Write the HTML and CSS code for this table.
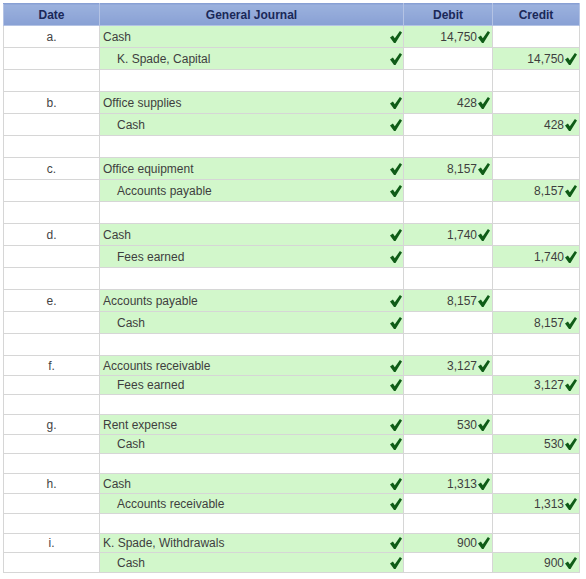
FILE: index.html
```html
<!DOCTYPE html>
<html>
<head>
<meta charset="utf-8">
<link rel="stylesheet" href="styles.css">
</head>
<body>
<svg class="defs" width="0" height="0" aria-hidden="true">
  <defs>
    <symbol id="tick" viewBox="0 0 12 12">
      <path d="M0 6.6 L2.9 4.5 L4.8 7.3 L9.9 0 L12 1.4 L5.5 11.9 L4 11.9 Z"/>
    </symbol>
  </defs>
</svg>
<table class="journal">
  <thead>
    <tr>
      <th class="c-date">Date</th>
      <th class="c-acct">General Journal</th>
      <th class="c-debit">Debit</th>
      <th class="c-credit">Credit</th>
    </tr>
  </thead>
  <tbody>
    <tr><td class="date">a.</td><td class="acct green"><div class="cell"><span>Cash</span><svg class="tk"><use href="#tick"/></svg></div></td><td class="amt green"><div class="num">14,750<svg class="tk"><use href="#tick"/></svg></div></td><td class="amt"></td></tr>
    <tr><td class="date"></td><td class="acct green"><div class="cell"><span class="ind">K. Spade, Capital</span><svg class="tk"><use href="#tick"/></svg></div></td><td class="amt"></td><td class="amt green"><div class="num">14,750<svg class="tk"><use href="#tick"/></svg></div></td></tr>
    <tr class="blank"><td></td><td></td><td></td><td></td></tr>

    <tr><td class="date">b.</td><td class="acct green"><div class="cell"><span>Office supplies</span><svg class="tk"><use href="#tick"/></svg></div></td><td class="amt green"><div class="num">428<svg class="tk"><use href="#tick"/></svg></div></td><td class="amt"></td></tr>
    <tr><td class="date"></td><td class="acct green"><div class="cell"><span class="ind">Cash</span><svg class="tk"><use href="#tick"/></svg></div></td><td class="amt"></td><td class="amt green"><div class="num">428<svg class="tk"><use href="#tick"/></svg></div></td></tr>
    <tr class="blank"><td></td><td></td><td></td><td></td></tr>

    <tr><td class="date">c.</td><td class="acct green"><div class="cell"><span>Office equipment</span><svg class="tk"><use href="#tick"/></svg></div></td><td class="amt green"><div class="num">8,157<svg class="tk"><use href="#tick"/></svg></div></td><td class="amt"></td></tr>
    <tr><td class="date"></td><td class="acct green"><div class="cell"><span class="ind">Accounts payable</span><svg class="tk"><use href="#tick"/></svg></div></td><td class="amt"></td><td class="amt green"><div class="num">8,157<svg class="tk"><use href="#tick"/></svg></div></td></tr>
    <tr class="blank"><td></td><td></td><td></td><td></td></tr>

    <tr><td class="date">d.</td><td class="acct green"><div class="cell"><span>Cash</span><svg class="tk"><use href="#tick"/></svg></div></td><td class="amt green"><div class="num">1,740<svg class="tk"><use href="#tick"/></svg></div></td><td class="amt"></td></tr>
    <tr><td class="date"></td><td class="acct green"><div class="cell"><span class="ind">Fees earned</span><svg class="tk"><use href="#tick"/></svg></div></td><td class="amt"></td><td class="amt green"><div class="num">1,740<svg class="tk"><use href="#tick"/></svg></div></td></tr>
    <tr class="blank"><td></td><td></td><td></td><td></td></tr>

    <tr><td class="date">e.</td><td class="acct green"><div class="cell"><span>Accounts payable</span><svg class="tk"><use href="#tick"/></svg></div></td><td class="amt green"><div class="num">8,157<svg class="tk"><use href="#tick"/></svg></div></td><td class="amt"></td></tr>
    <tr><td class="date"></td><td class="acct green"><div class="cell"><span class="ind">Cash</span><svg class="tk"><use href="#tick"/></svg></div></td><td class="amt"></td><td class="amt green"><div class="num">8,157<svg class="tk"><use href="#tick"/></svg></div></td></tr>
    <tr class="blank"><td></td><td></td><td></td><td></td></tr>

    <tr><td class="date">f.</td><td class="acct green"><div class="cell"><span>Accounts receivable</span><svg class="tk"><use href="#tick"/></svg></div></td><td class="amt green"><div class="num">3,127<svg class="tk"><use href="#tick"/></svg></div></td><td class="amt"></td></tr>
    <tr><td class="date"></td><td class="acct green"><div class="cell"><span class="ind">Fees earned</span><svg class="tk"><use href="#tick"/></svg></div></td><td class="amt"></td><td class="amt green"><div class="num">3,127<svg class="tk"><use href="#tick"/></svg></div></td></tr>
    <tr class="blank"><td></td><td></td><td></td><td></td></tr>

    <tr><td class="date">g.</td><td class="acct green"><div class="cell"><span>Rent expense</span><svg class="tk"><use href="#tick"/></svg></div></td><td class="amt green"><div class="num">530<svg class="tk"><use href="#tick"/></svg></div></td><td class="amt"></td></tr>
    <tr><td class="date"></td><td class="acct green"><div class="cell"><span class="ind">Cash</span><svg class="tk"><use href="#tick"/></svg></div></td><td class="amt"></td><td class="amt green"><div class="num">530<svg class="tk"><use href="#tick"/></svg></div></td></tr>
    <tr class="blank"><td></td><td></td><td></td><td></td></tr>

    <tr><td class="date">h.</td><td class="acct green"><div class="cell"><span>Cash</span><svg class="tk"><use href="#tick"/></svg></div></td><td class="amt green"><div class="num">1,313<svg class="tk"><use href="#tick"/></svg></div></td><td class="amt"></td></tr>
    <tr><td class="date"></td><td class="acct green"><div class="cell"><span class="ind">Accounts receivable</span><svg class="tk"><use href="#tick"/></svg></div></td><td class="amt"></td><td class="amt green"><div class="num">1,313<svg class="tk"><use href="#tick"/></svg></div></td></tr>
    <tr class="blank"><td></td><td></td><td></td><td></td></tr>

    <tr><td class="date">i.</td><td class="acct green"><div class="cell"><span>K. Spade, Withdrawals</span><svg class="tk"><use href="#tick"/></svg></div></td><td class="amt green"><div class="num">900<svg class="tk"><use href="#tick"/></svg></div></td><td class="amt"></td></tr>
    <tr><td class="date"></td><td class="acct green"><div class="cell"><span class="ind">Cash</span><svg class="tk"><use href="#tick"/></svg></div></td><td class="amt"></td><td class="amt green"><div class="num">900<svg class="tk"><use href="#tick"/></svg></div></td></tr>
  </tbody>
</table>
</body>
</html>
```

FILE: styles.css
```css
html, body {
  margin: 0;
  padding: 0;
  background: #ffffff;
}

body {
  padding: 3px 0 0 3px;
  font-family: "Liberation Sans", Arial, sans-serif;
  font-size: 12px;
  color: #3e3e3e;
}

.defs {
  position: absolute;
  width: 0;
  height: 0;
}

.journal {
  border-collapse: collapse;
  table-layout: fixed;
  width: 573px;
}

.journal th,
.journal td {
  padding: 0;
  border: 1px solid #d6d6d6;
}

.journal thead th {
  height: 21px;
  background: linear-gradient(#9cb2de, #88a0d4);
  color: #1a2858;
  font-weight: bold;
  font-size: 12px;
  text-align: center;
  border: 1px solid #b4c3e4;
  border-top-color: #88a0d4;
}

.c-date { width: 95px; }
.c-acct { width: 303px; }
.c-debit { width: 88px; }
.c-credit { width: 86px; }

.journal tbody tr { height: 22px; }
.journal tbody tr:nth-child(n+16) { height: 20px; }
.journal tbody tr:nth-child(17),
.journal tbody tr:nth-child(20),
.journal tbody tr:nth-child(25) { height: 19px; }

.journal td.date {
  text-align: center;
  color: #444;
}

.journal td.green {
  background: #d2f7cb;
}

.cell {
  display: flex;
  align-items: center;
  justify-content: space-between;
  padding: 0 1px 0 3px;
}

.ind {
  padding-left: 14px;
}

.num {
  display: flex;
  align-items: center;
  justify-content: flex-end;
  gap: 1px;
  padding-right: 2px;
}

.tk {
  width: 12px;
  height: 12px;
  fill: #0f5c17;
  flex: none;
}
```
